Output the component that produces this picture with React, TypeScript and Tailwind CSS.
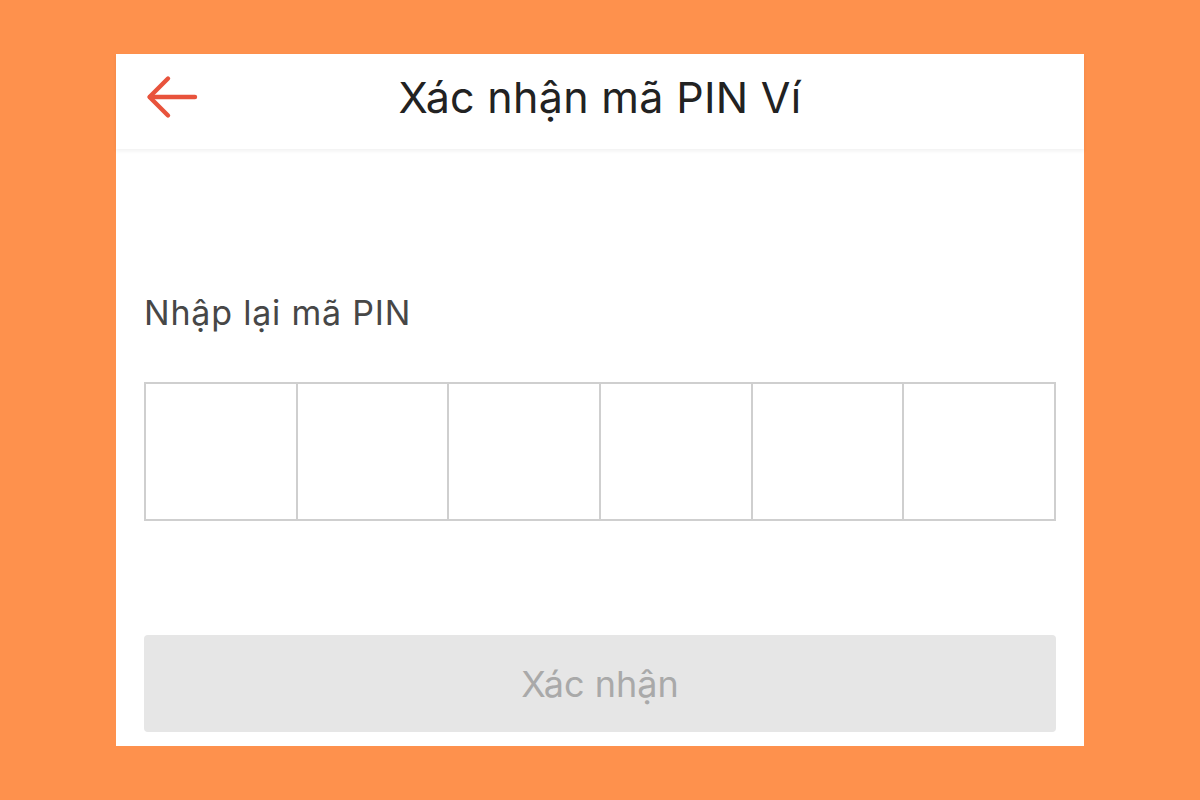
const cells = [0, 1, 2, 3, 4, 5];

function BackArrow() {
  return (
    <svg width="52" height="44" viewBox="0 0 52 44" fill="none" stroke="#e8533c" strokeWidth="4.4" strokeLinecap="round" strokeLinejoin="round">
      <path d="M49 22H4" />
      <path d="M22 3.5L3.5 22L22 40.5" />
    </svg>
  );
}

export default function App() {
  return (
    <div className="flex h-[800px] w-full items-start justify-center bg-[#fe914d] pt-[54px] font-['Inter',sans-serif]">
      <div className="flex h-[692px] w-[968px] flex-col bg-white">
        {/* header */}
        <div className="relative flex h-[95px] items-center justify-center pb-[8px] shadow-[0_2px_4px_rgba(0,0,0,0.06)]">
          <button className="absolute left-[30px] top-[21px]">
            <BackArrow />
          </button>
          <h1 className="text-[43px] tracking-[0.3px] text-[#222]">Xác nhận mã PIN Ví</h1>
        </div>

        <div className="flex flex-1 flex-col px-[28px]">
          <p className="mt-[147px] text-[34px] leading-none tracking-[0.8px] text-[#474747]">Nhập lại mã PIN</p>

          <div className="mt-[52px] flex h-[139px] border-2 border-[#cfcfcf]">
            {cells.map((i) => (
              <div key={i} className="flex-1 border-l-2 border-[#cfcfcf] first:border-l-0" />
            ))}
          </div>

          <button className="mt-[114px] flex h-[97px] items-center justify-center rounded-[4px] bg-[#e6e6e6] text-[36px] text-[#a9a9a9]">
            Xác nhận
          </button>
        </div>
      </div>
    </div>
  );
}
